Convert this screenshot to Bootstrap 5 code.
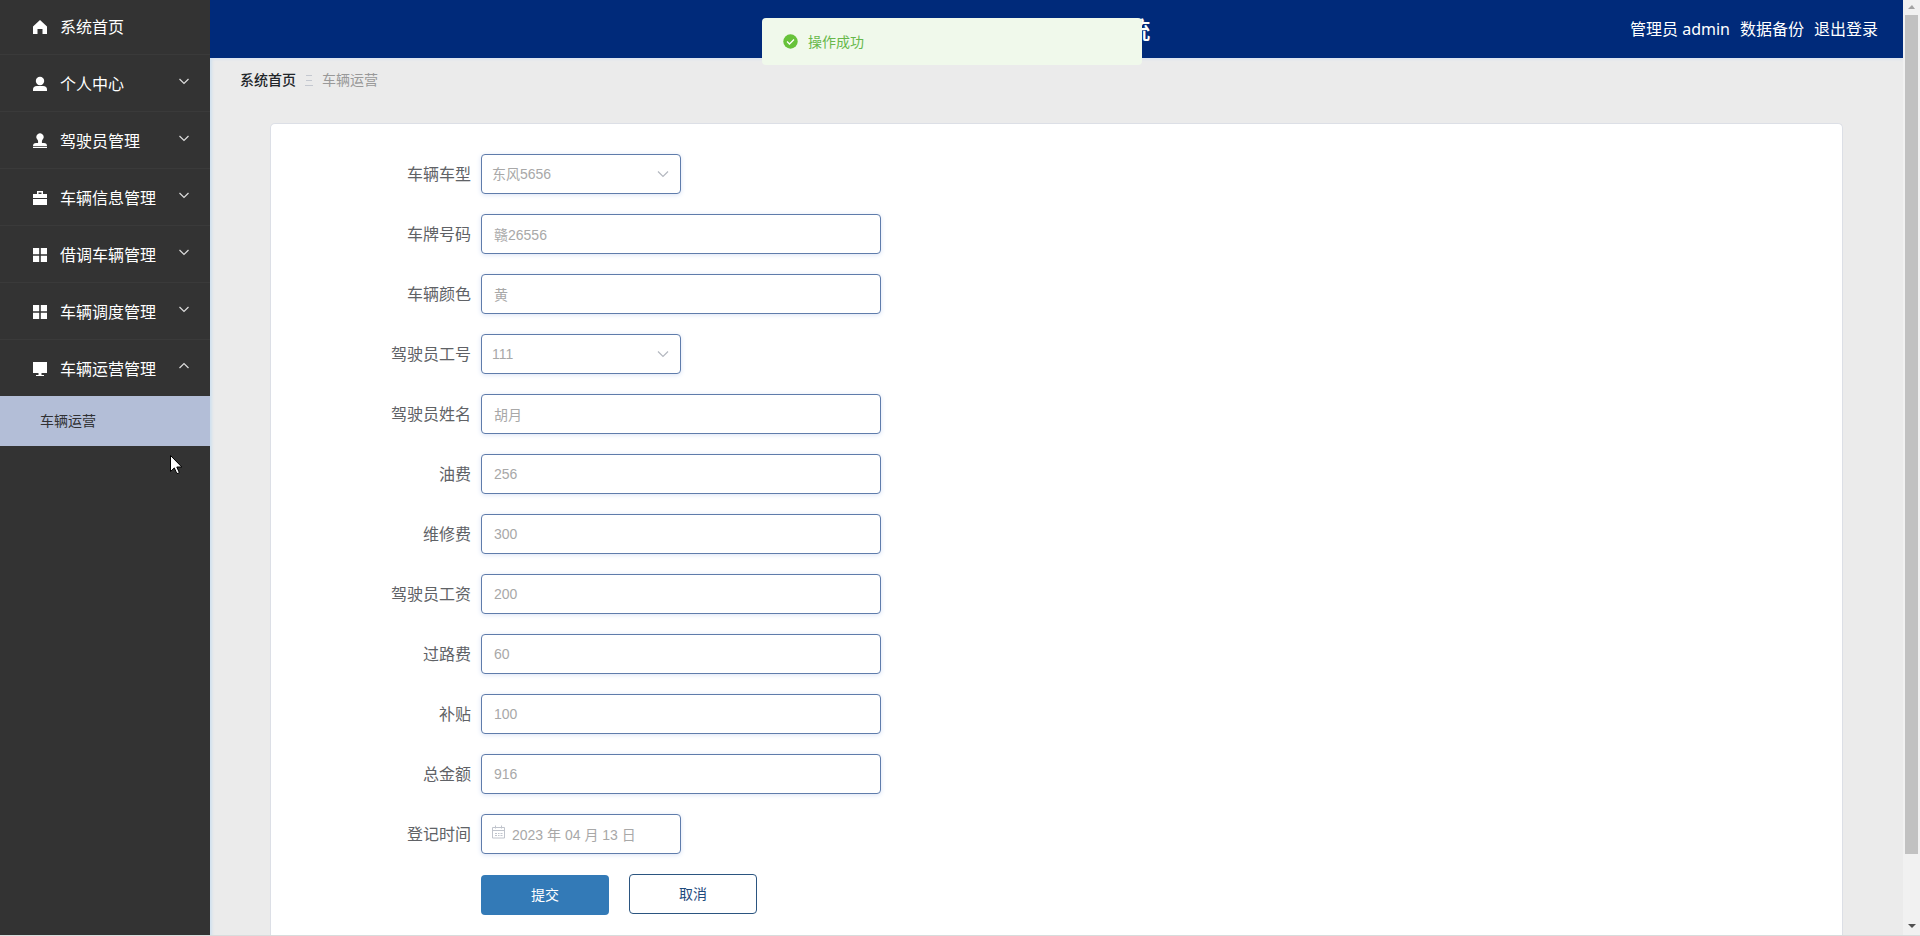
<!DOCTYPE html>
<html lang="zh-CN">
<head>
<meta charset="utf-8">
<meta name="viewport" content="width=device-width, initial-scale=1">
<title>车辆运营</title>
<link href="https://cdn.jsdelivr.net/npm/bootstrap@5.3.0/dist/css/bootstrap.min.css" rel="stylesheet">
<style>
body{font-family:"Noto Sans","Noto Sans CJK SC",sans-serif;font-size:14px;background:#ebebeb;overflow:hidden}
a{text-decoration:none}
.side{width:210px;background:#333}
.side-item{height:57px;padding:2px 20px 0 32px;color:#fff;font-size:16px;background:none;border:0;border-bottom:1px solid #3a3a3a;text-align:left}
.side-item.home{height:55px;padding-top:0}
.side-item.open{height:56px;border-bottom:0}
.side-item .ico{width:16px;height:16px;fill:#fff}
.side-item .arrow{width:12px;height:12px;fill:none;stroke:#ddd;margin-bottom:6px}
.side-sub{height:50px;padding:0 0 2px 40px;background:#b3bed7;color:#303133}
.content-col{box-shadow:inset 4px 0 3px -2px #cfe0ef}
.top-bar{height:58px;background:#002a7a;color:#fff;font-size:16px;padding-right:25px;gap:10px;box-shadow:0 1px 3px #d5e0f2}
.top-bar a{color:#fff}
.site-title{font-size:24px;font-weight:500;line-height:60px;padding-right:4px}
.crumbs{padding:12px 30px 0;line-height:20px;gap:9px}
.crumbs .now{color:#999}
.panel{margin:33px 60px 0;border:1px solid #dcdfe6;border-bottom:0;border-radius:5px 5px 0 0;background:#fff;padding:30px 20px 0 0}
.line{margin-bottom:20px;gap:10px}
.line>label,.lead-gap{width:200px;text-align:right;font-size:16px;color:#606266}
.field{width:400px;height:40px;border:1px solid #5f7cab;border-radius:4px;box-shadow:0 1px 5px #d9e2f5;background-color:#fff;color:#a8a8a8;font:14px "Liberation Sans","Noto Sans CJK SC",sans-serif;padding:0 12px;outline:0}
.field.short{width:200px}
select.field{appearance:none;padding:0 10px;background:#fff url("data:image/svg+xml,%3Csvg xmlns='http://www.w3.org/2000/svg' viewBox='0 0 12 12'%3E%3Cpath d='M1 3.500l5 5 5-5' fill='none' stroke='%23b4b8c0' stroke-width='1.200'/%3E%3C/svg%3E") no-repeat right 11px center/12px}
.date-field input{padding-left:30px}
.date-field svg{left:11px;top:11px;width:13px;height:14px;fill:none;stroke:#c0c4cc}
.act{width:128px;height:40px;border-radius:4px;border:0;padding-bottom:2px;font-size:14px}
.act.go{background:#337ab7;color:#fff;margin-top:1px}
.act.stop{background:#fff;color:#1f4b7d;border:1px solid #2b5580}
.toast-ok{top:18px;left:50%;width:380px;height:47px;margin-left:-198px;padding-left:21px;gap:10px;background:#f0f9eb;border-radius:4px;color:#67b84a;z-index:5}
.rail{width:17px;background:#f1f1f1}
.rail .thumb{width:13px;height:89.6%;background:#c1c1c1;align-self:center}
.foot-line{left:0;right:0;bottom:0;height:1px;background:#d8dcdc}
.pointer{left:170px;top:455px;width:13px;height:20px}
</style>
</head>
<body>
<div class="d-flex vh-100 position-relative">
<nav class="side d-flex flex-column flex-shrink-0" id="side"></nav>
<div class="content-col d-flex flex-column flex-grow-1 overflow-hidden">
<header class="top-bar position-relative d-flex flex-shrink-0 align-items-center justify-content-end">
<div class="site-title position-absolute top-0 start-0 w-100 text-center">企业车辆管理系统</div>
<span class="position-relative">管理员 admin</span><a class="position-relative" href="#">数据备份</a><a class="position-relative" href="#">退出登录</a>
</header>
<nav class="crumbs d-flex align-items-center"><a class="text-dark fw-medium" href="#">系统首页</a>
<svg width="8" height="12" stroke="#c4c8d0"><path d="M1 1.500h6M1 6.500h6M0 11.500h8"/></svg><span class="now">车辆运营</span></nav>
<form class="panel flex-grow-1" id="form"></form>
</div>
<div class="rail d-flex flex-column flex-shrink-0">
<svg width="17" height="15" class="flex-shrink-0"><path d="M5 9l4-4 3 4z" fill="#a3a3a3"/></svg>
<div class="thumb mb-auto"></div>
<svg width="17" height="17" class="flex-shrink-0"><path d="M5 5h8l-4 4z" fill="#505050"/></svg>
</div>
<div class="toast-ok position-fixed d-flex align-items-center" role="status">
<svg width="15" height="15" viewBox="0 0 15 15"><circle cx="7.500" cy="7.500" r="7.200" fill="#67c23a"/><path d="M4 7.500l2.500 2.500L11 5.500" fill="none" stroke="#fff" stroke-width="1.300"/></svg>操作成功</div>
<div class="foot-line position-absolute"></div>
<svg class="pointer position-absolute" viewBox="0 0 13 20"><path d="M.500 .500v16l3.800-3.600 2.600 5.800 2.500-1-2.600-5.700h5z" fill="#fff" stroke="#000"/></svg>
</div>
<script src="https://cdn.jsdelivr.net/npm/bootstrap@5.3.0/dist/js/bootstrap.bundle.min.js"></script>
<script>
const icons={
home:'<path d="M8 1L1 7.500V15h4.500V10h5v5H15V7.500z"/>',
user:'<circle cx="8" cy="5" r="4.200"/><path d="M1 15v-1.500Q1 10 5 10h6q4 0 4 3.500V15z"/>',
stamp:'<path d="M6 10Q6.500 7.500 5 6A3.600 3.600 0 1 1 11 6Q9.500 7.500 10 10H12q3 0 3 3H1Q1 10 4 10zM1 13.700h14V15H1z"/>',
bag:'<path d="M5 4V1h6v3h4v4H1V4zm1.500 0h3V2.500h-3zM1 9h14v6H1z" fill-rule="evenodd"/>',
grid:'<path d="M1 1h6.200v6.200H1zM8.800 1H15v6.200H8.800zM1 8.800h6.200V15H1zM8.800 8.800H15V15H8.800z"/>',
screen:'<path d="M1 1h14v11H1zM6.500 12h3v2H12v1H4v-1h2.500z"/>'};
const menu=[['user','个人中心'],['stamp','驾驶员管理'],['bag','车辆信息管理'],['grid','借调车辆管理'],['grid','车辆调度管理'],['screen','车辆运营管理']];
const ico=n=>`<svg class="ico" viewBox="0 0 16 16">${icons[n]}</svg>`;
document.getElementById('side').innerHTML=
`<a href="#" class="side-item home d-flex align-items-center gap-2">${ico('home')}<span class="ms-1">系统首页</span></a>`+
menu.map(([i,t],k)=>`<button type="button" class="side-item d-flex align-items-center gap-2${k==5?' open':''}">${ico(i)}<span class="ms-1">${t}</span><svg class="arrow ms-auto" viewBox="0 0 12 12"><path d="${k==5?'M1.500 8L6 3.500 10.500 8':'M1.500 4L6 8.500 10.500 4'}" stroke-width="1.200"/></svg></button>`).join('')+
'<a href="#" class="side-sub d-flex align-items-center">车辆运营</a>';
const rows=[['车辆车型','东风5656','s'],['车牌号码','赣26556'],['车辆颜色','黄'],['驾驶员工号','111','s'],['驾驶员姓名','胡月'],['油费','256'],['维修费','300'],['驾驶员工资','200'],['过路费','60'],['补贴','100'],['总金额','916'],['登记时间','2023 年 04 月 13 日','d']];
document.getElementById('form').innerHTML=rows.map(([l,v,t],i)=>{
const c=t=='s'?`<select class="field short" id="f${i}"><option>${v}</option></select>`
:t=='d'?`<div class="date-field position-relative"><input class="field short" id="f${i}" value="${v}"><svg class="position-absolute" viewBox="0 0 13 14"><path d="M.500 2.500h12v10.500H.500zM.500 5.500h12M3.500 .500v3M9.500 .500v3M3 8.500h2M6 8.500h1.500M8.500 8.500h2M3 10.500h2M6 10.500h1.500M8.500 10.500h2"/></svg></div>`
:`<input class="field" id="f${i}" value="${v}">`;
return `<div class="line d-flex align-items-center"><label for="f${i}">${l}</label>${c}</div>`}).join('')+
'<div class="d-flex line"><div class="lead-gap"></div><div class="d-flex align-items-start"><button type="submit" class="act go me-3">提交</button><button type="button" class="act stop ms-1">取消</button></div></div>';
</script>
</body>
</html>
